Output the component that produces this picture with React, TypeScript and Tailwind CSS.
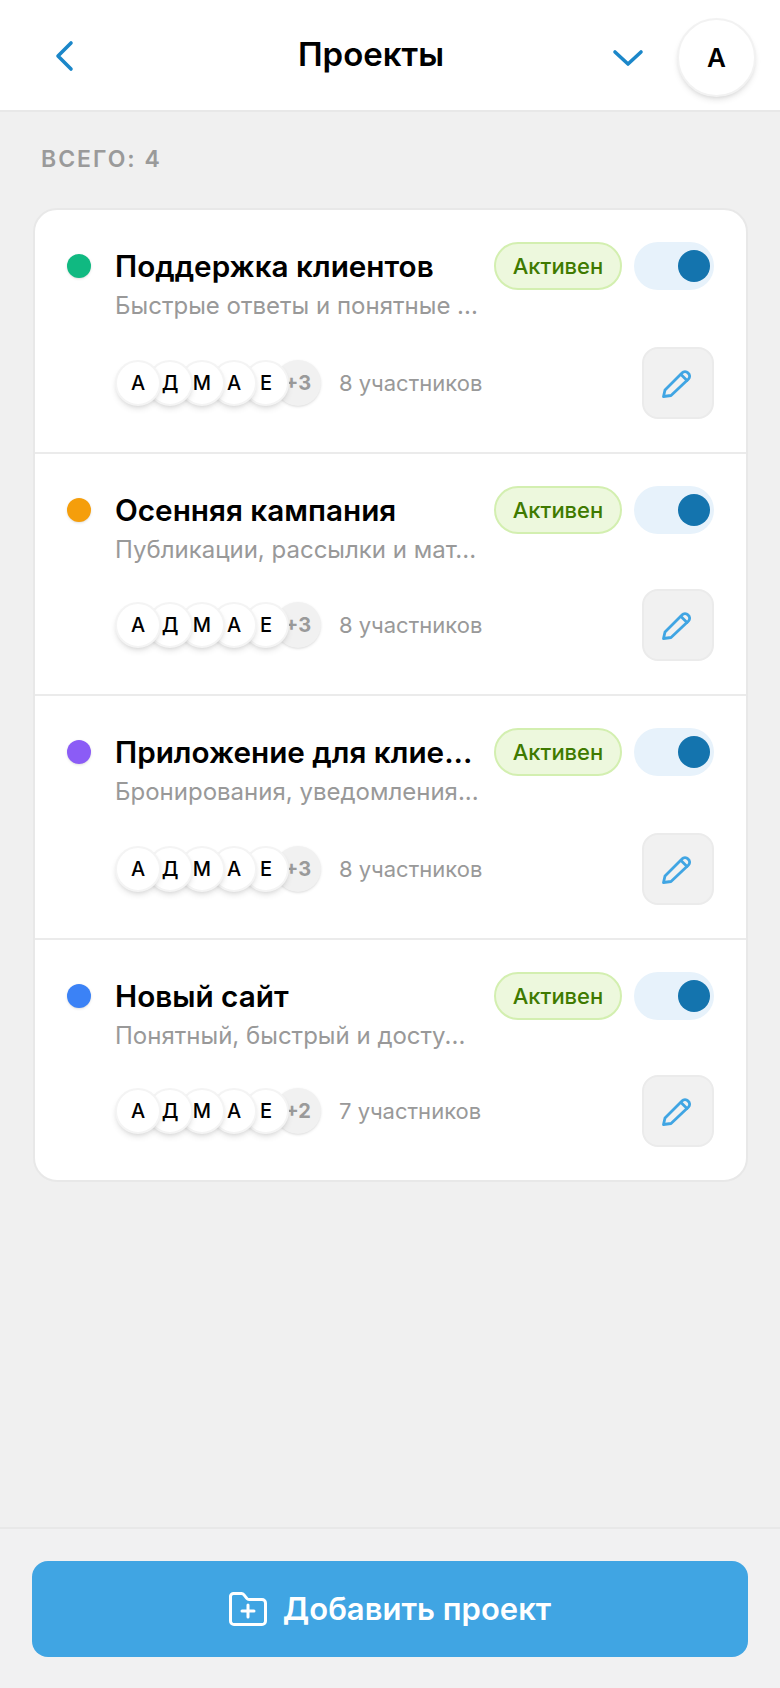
const PROJECTS = [
    { name: 'Поддержка клиентов', desc: 'Быстрые ответы и понятные ...', dot: 'bg-[#10b981]', more: '+3', count: '8 участников', height: 'h-[244px]', gap: 'mt-[26px]' },
    { name: 'Осенняя кампания', desc: 'Публикации, рассылки и мат...', dot: 'bg-[#f59e0b]', more: '+3', count: '8 участников', height: 'h-[242px]', gap: 'mt-[24px]' },
    { name: 'Приложение для клие...', desc: 'Бронирования, уведомления...', dot: 'bg-[#8b5cf6]', more: '+3', count: '8 участников', height: 'h-[244px]', gap: 'mt-[26px]' },
    { name: 'Новый сайт', desc: 'Понятный, быстрый и досту...', dot: 'bg-[#3b82f6]', more: '+2', count: '7 участников', height: 'h-[240px]', gap: 'mt-[24px]' },
];

const INITIALS = ['А', 'Д', 'М', 'А', 'Е'];

const ProjectRow = ({ project }: { project: (typeof PROJECTS)[number] }) => (
    <div className={`flex border-b-2 border-[#ebebeb] last:border-b-0 pt-8 pl-[32px] pr-8 ${project.height}`}>
        <div className={`w-6 h-6 mt-3 shrink-0 rounded-full shadow-sm ${project.dot}`}></div>
        <div className="ml-6 flex-1 min-w-0">
            <div className="flex items-start gap-3">
                <div className="flex-1 min-w-0">
                    <h2 className="text-[29.7px] leading-[48px] h-[49px] font-semibold text-black whitespace-nowrap">{project.name}</h2>
                    <p className="text-[24px] leading-[30px] text-[#999999] whitespace-nowrap">{project.desc}</p>
                </div>
                <span className="h-12 w-[128px] shrink-0 flex items-center justify-center rounded-full border-2 border-[#d3efb0] bg-[#edf8dd] text-[22px] font-medium text-[#3f7a00]">
                    Активен
                </span>
                <div className="h-12 w-20 shrink-0 flex items-center justify-end pr-1 rounded-full bg-[#e7f2fb]">
                    <div className="w-8 h-8 rounded-full bg-[#1474ae]"></div>
                </div>
            </div>
            <div className={`flex items-center ${project.gap}`}>
                <div className="flex">
                    {INITIALS.map((letter, i) => (
                        <div
                            key={i}
                            style={{ zIndex: 10 - i }}
                            className="relative w-[46px] h-[46px] -mr-3.5 flex items-center justify-center rounded-full bg-white border-2 border-[#f4f4f4] shadow-md text-[20px] font-medium text-black"
                        >
                            {letter}
                        </div>
                    ))}
                    <div className="w-[46px] h-[46px] flex items-center justify-center rounded-full bg-[#f1f1f1] shadow-sm text-[20px] font-bold text-[#9a9a9a]">
                        {project.more}
                    </div>
                </div>
                <span className="ml-[18px] text-[22px] text-[#999999]">{project.count}</span>
                <button className="ml-auto w-[72px] h-[72px] flex items-center justify-center rounded-2xl bg-[#f1f1f1] border-2 border-[#ebebeb] text-[#40a5e3]">
                    <svg width="32" height="30" viewBox="0 0 32 30" fill="none" stroke="currentColor" strokeWidth="2.8" strokeLinecap="round" strokeLinejoin="round">
                        <path d="M1.5 28.5L3 22L20 5a4 4 0 0 1 6 0a4 4 0 0 1 .5 6L9 27.5Z" />
                        <path d="M19 6.5l6 6" />
                    </svg>
                </button>
            </div>
        </div>
    </div>
);

const App = () => {
    return (
        <div className="w-[780px] h-[1688px] flex flex-col bg-[#f0f0f0] font-['Inter',sans-serif]">
            <header className="h-[112px] shrink-0 flex items-center bg-white border-b-2 border-[#e8e8e8] relative">
                <button className="ml-[55px] mt-[2px] text-[#1b87c9]">
                    <svg width="20" height="32" viewBox="0 0 20 32" fill="none" stroke="currentColor" strokeWidth="3.6" strokeLinecap="round" strokeLinejoin="round">
                        <path d="M16 3L3 16l13 13" />
                    </svg>
                </button>
                <h1 className="absolute left-0 right-0 text-center pr-[38px] text-[33px] font-semibold text-black">Проекты</h1>
                <button className="ml-auto mr-[33px] mt-[6px] text-[#1b87c9]">
                    <svg width="32" height="18" viewBox="0 0 32 18" fill="none" stroke="currentColor" strokeWidth="3.6" strokeLinecap="round" strokeLinejoin="round">
                        <path d="M3 3l13 12L29 3" />
                    </svg>
                </button>
                <div className="mr-[24px] mt-1 w-[79px] h-[79px] flex items-center justify-center rounded-full bg-white border-2 border-[#f2f2f2] shadow-md text-[26px] font-semibold text-black">
                    А
                </div>
            </header>

            <main className="flex-1 pl-[33px] pr-[32px]">
                <p className="mt-[33px] ml-2 text-[23px] leading-7 font-semibold tracking-[2px] text-[#9a9a9a]">ВСЕГО: 4</p>
                <div className="mt-[35px] bg-white rounded-3xl border-2 border-[#e8e8e8] overflow-hidden">
                    {PROJECTS.map(project => (
                        <ProjectRow key={project.name} project={project} />
                    ))}
                </div>
            </main>

            <footer className="h-[161px] shrink-0 pt-8 px-8 bg-[#f1f1f2] border-t-2 border-[#e8e8e8]">
                <button className="w-full h-24 flex items-center justify-center gap-4 rounded-2xl bg-[#40a5e3] text-white text-[31px] font-semibold">
                    <svg width="38" height="34" viewBox="0 0 38 34" fill="none" stroke="currentColor" strokeWidth="3" strokeLinecap="round" strokeLinejoin="round">
                        <path d="M5 1.5h7.5a3 3 0 0 1 2.3 1.1l3 3.8a3 3 0 0 0 2.3 1.1H33a3.5 3.5 0 0 1 3.5 3.5v18a3.5 3.5 0 0 1-3.5 3.5H5a3.5 3.5 0 0 1-3.5-3.5v-25A3.5 3.5 0 0 1 5 1.5z" />
                        <path d="M19 13v12M13 19h12" />
                    </svg>
                    Добавить проект
                </button>
            </footer>
        </div>
    );
};

export default App;
